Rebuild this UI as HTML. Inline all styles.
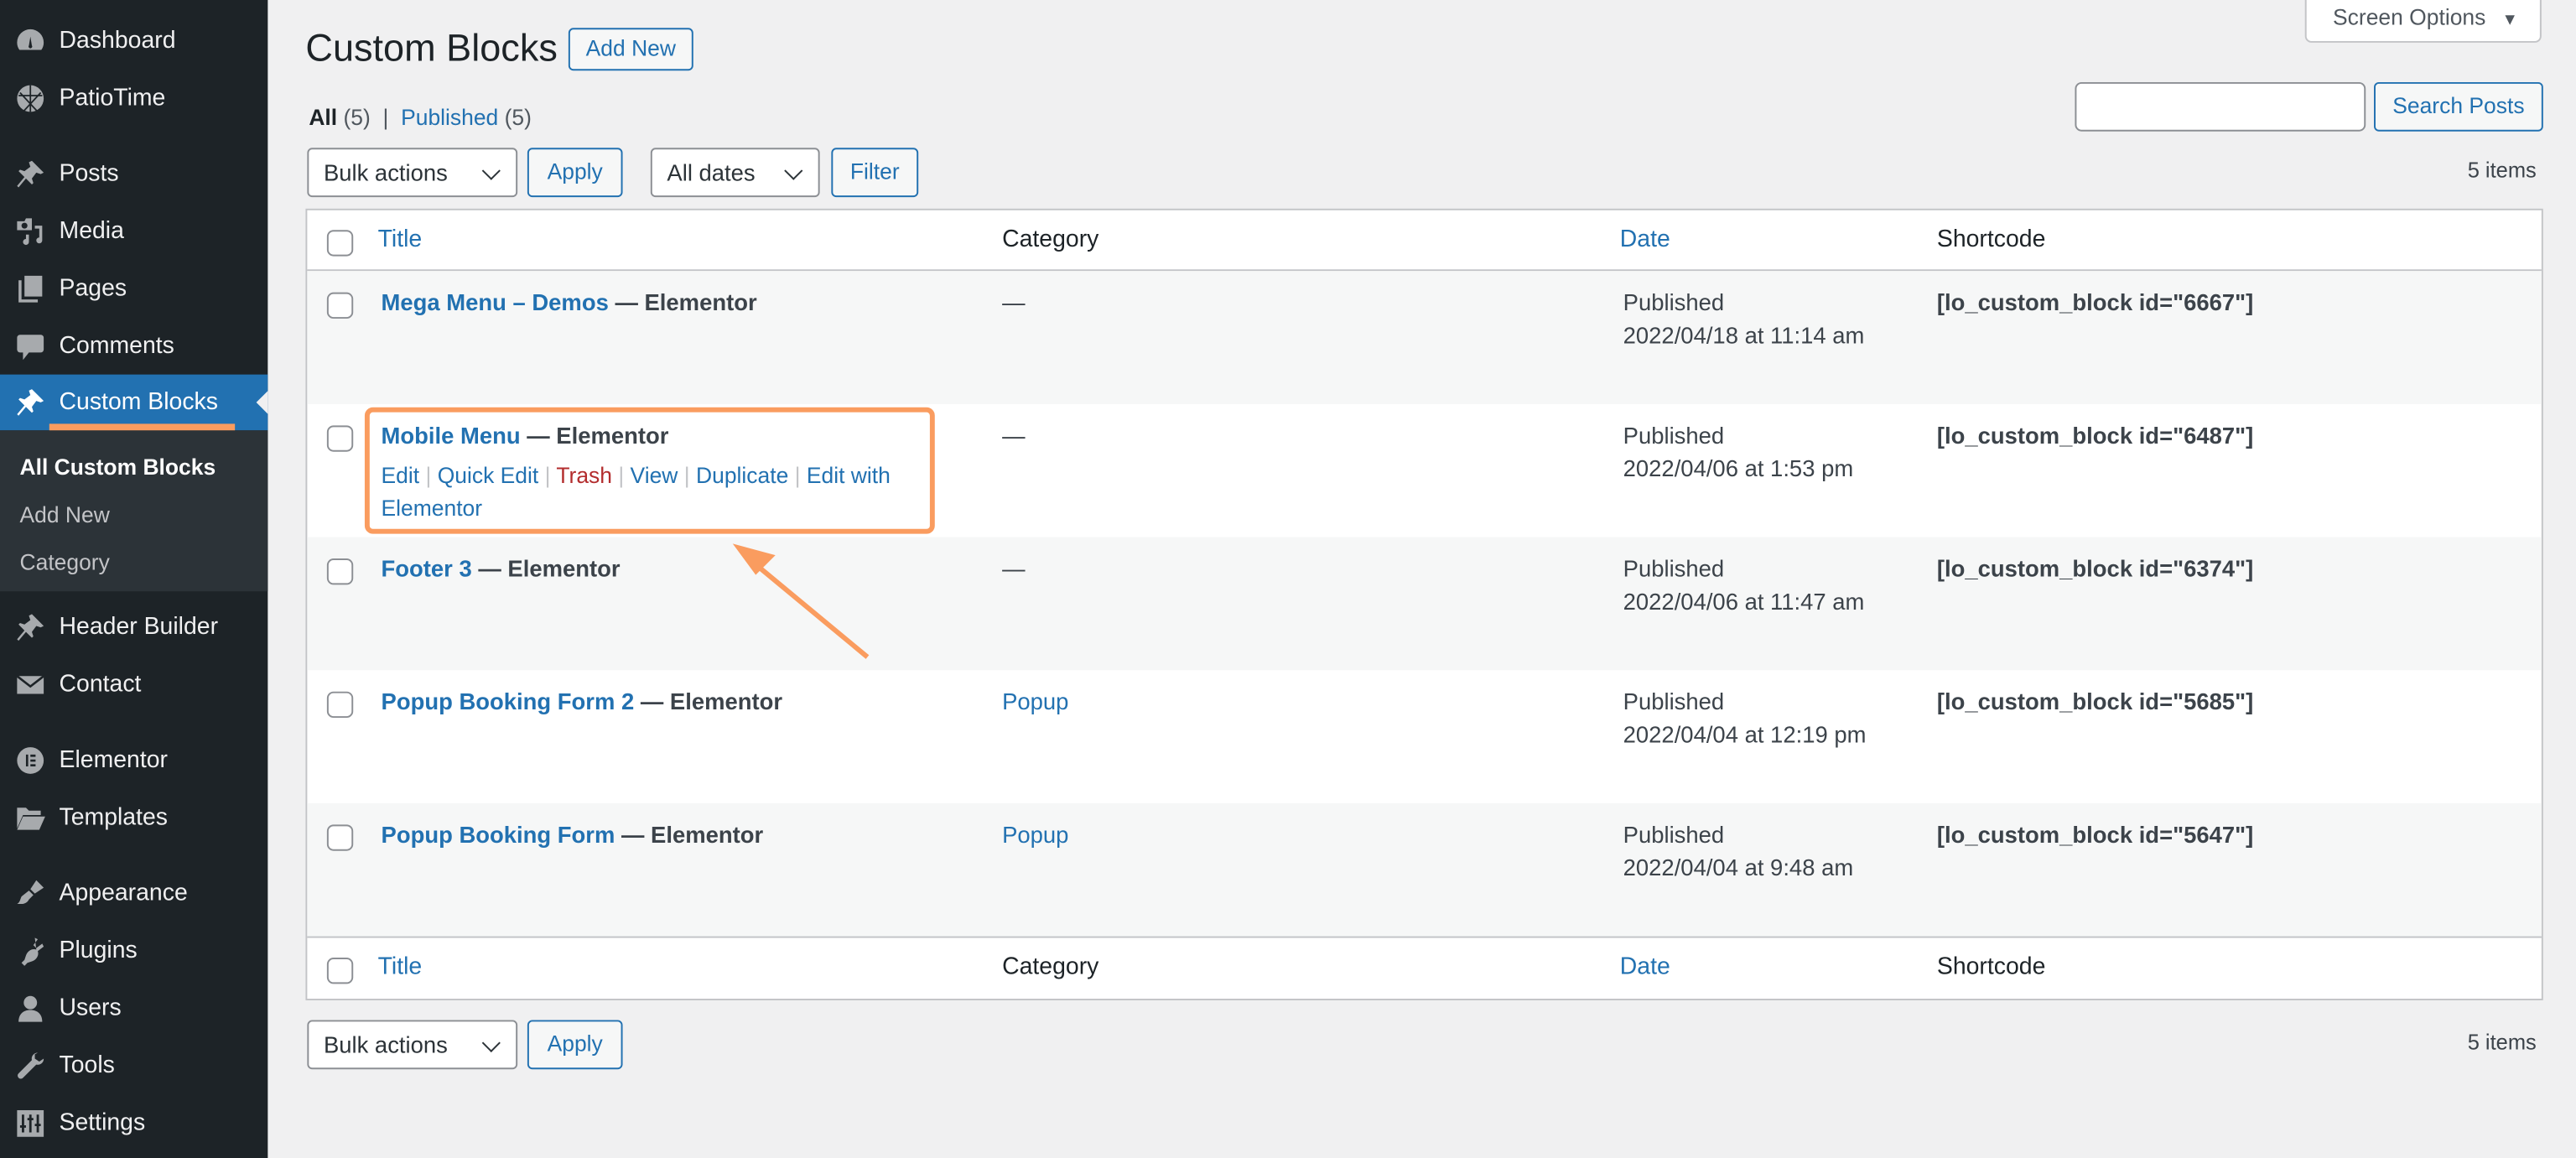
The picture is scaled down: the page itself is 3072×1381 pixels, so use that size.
<!DOCTYPE html>
<html><head><meta charset="utf-8"><style>
*{box-sizing:border-box;margin:0;padding:0}
html,body{width:3072px;height:1381px;overflow:hidden;background:#f0f0f1}
#w{width:1568px;height:705px;transform:scale(1.95918,1.9589);transform-origin:0 0;position:relative;font-family:"Liberation Sans",sans-serif;font-size:14px;color:#3c434a}
.sb{position:absolute;left:0;top:0;width:163px;height:705px;background:#1d2327}
.mi{position:absolute;left:0;width:163px;height:34px;color:#f0f0f1;font-size:14.5px;line-height:34px;padding-left:36px}
.ic{position:absolute;left:9px;top:8px;width:19px;height:18px;color:#a7aaad}
.sub{position:absolute;left:0;top:262px;width:163px;height:98px;background:#2c3338}
.sub div{position:absolute;left:12px;font-size:13.5px;color:#c3c4c7}
a,.l{color:#2271b1;text-decoration:none}
.btn{position:absolute;height:30px;border:1px solid #2271b1;border-radius:3px;color:#2271b1;background:#f6f7f7;font-size:13.5px;line-height:28px;text-align:center}
.sel{position:absolute;height:30px;border:1px solid #8c8f94;border-radius:3px;background:#fff;font-size:14px;line-height:28px;padding-left:9px;color:#2c3338}
.sel:after{content:"";position:absolute;right:11px;top:9px;width:7px;height:7px;border-right:1.5px solid #2c3338;border-bottom:1.5px solid #2c3338;transform:rotate(45deg)}
.tbl{position:absolute;left:186px;top:127px;width:1362px;height:482px;border:1px solid #c3c4c7;background:#fff}
.row{position:absolute;left:0;width:1360px;height:81px}
.cb{position:absolute;left:12px;width:16px;height:16px;border:1px solid #8c8f94;border-radius:4px;background:#fff}
.t{position:absolute;left:45px;font-weight:bold;font-size:14px}
.t b{color:#2271b1}
.c{position:absolute;left:423px}
.d{position:absolute;left:801px;line-height:20px}
.s{position:absolute;left:992px;font-weight:bold}
.h{position:absolute;font-size:14.5px;color:#1d2327}
</style></head><body><div id="w">
<div class="sb">
<div class="mi" style="top:8px"><svg class="ic" viewBox="0 0 20 20"><path fill="#a7aaad" d="M10 2a9 9 0 0 0-9 9c0 2 .6 3.6 1.6 5h14.8c1-1.4 1.6-3 1.6-5a9 9 0 0 0-9-9zm0 5 1 6a1.2 1.2 0 1 1-2 0z"/></svg>Dashboard</div>
<div class="mi" style="top:43px"><svg class="ic" viewBox="0 0 20 20"><circle cx="10" cy="10" r="9" fill="#a7aaad"/><path d="M10 1v18M3 6l12 13M17 6 5 19M2 8h16" stroke="#1d2327" stroke-width="1"/></svg>PatioTime</div>
<div class="mi" style="top:89px"><svg class="ic" viewBox="0 0 20 20"><path fill="#a7aaad" d="M11 1l8 8-2 1-3-1-3 4 1 3-1 1-4-4-5 6-1-1 5-6-4-4 1-1 3 1 4-3-1-3z"/></svg>Posts</div>
<div class="mi" style="top:124px"><svg class="ic" viewBox="0 0 20 20"><path fill="#a7aaad" d="M1 3h5l1-2h4v8H1zM13 6h5v10a2 2 0 1 1-2-2V8h-3zM9 12v5a2 2 0 1 1-2-2v-3z"/><circle cx="6" cy="6" r="2" fill="#1d2327"/></svg>Media</div>
<div class="mi" style="top:159px"><svg class="ic" viewBox="0 0 20 20"><path fill="#a7aaad" d="M6 1h12v14H6zM2 4h2v13h11v2H2z"/></svg>Pages</div>
<div class="mi" style="top:194px"><svg class="ic" viewBox="0 0 20 20"><path fill="#a7aaad" d="M3 2h14a2 2 0 0 1 2 2v8a2 2 0 0 1-2 2H9l-4 5v-5H3a2 2 0 0 1-2-2V4a2 2 0 0 1 2-2z"/></svg>Comments</div>
<div class="mi" style="top:228px;background:#2271b1;color:#fff"><svg class="ic" viewBox="0 0 20 20" style="color:#fff"><path fill="#fff" d="M11 1l8 8-2 1-3-1-3 4 1 3-1 1-4-4-5 6-1-1 5-6-4-4 1-1 3 1 4-3-1-3z"/></svg>Custom Blocks
<div style="position:absolute;right:0;top:10px;border:7px solid transparent;border-right-color:#f0f0f1;border-left:0"></div></div>
<div style="position:absolute;left:30px;top:258px;width:113px;height:5px;background:#fa9c5f"></div>
<div class="sub"><div style="top:15px;color:#fff;font-weight:bold">All Custom Blocks</div><div style="top:44px">Add New</div><div style="top:73px">Category</div></div>
<div class="mi" style="top:365px"><svg class="ic" viewBox="0 0 20 20"><path fill="#a7aaad" d="M11 1l8 8-2 1-3-1-3 4 1 3-1 1-4-4-5 6-1-1 5-6-4-4 1-1 3 1 4-3-1-3z"/></svg>Header Builder</div>
<div class="mi" style="top:400px"><svg class="ic" viewBox="0 0 20 20"><path fill="#a7aaad" d="M1 4h18v12H1z"/><path d="M1 4l9 7 9-7" stroke="#1d2327" stroke-width="1.5" fill="none"/></svg>Contact</div>
<div class="mi" style="top:446px"><svg class="ic" viewBox="0 0 20 20"><circle cx="10" cy="10" r="9" fill="#a7aaad"/><path d="M7 6h1.5v8H7zM10 6h3.5v1.5H10zM10 9.3h3.5v1.5H10zM10 12.5h3.5V14H10z" fill="#1d2327"/></svg>Elementor</div>
<div class="mi" style="top:481px"><svg class="ic" viewBox="0 0 20 20"><path fill="#a7aaad" d="M1 3h6l2 2h8v3H5l-4 9zM5 9h15l-4 9H1z"/></svg>Templates</div>
<div class="mi" style="top:527px"><svg class="ic" viewBox="0 0 20 20"><path fill="#a7aaad" d="M14 1l5 5-6 4-3-3zM9 8l3 3-3 3c-1 2-3 3-5 3H1c2-1 2-3 3-5z"/></svg>Appearance</div>
<div class="mi" style="top:562px"><svg class="ic" viewBox="0 0 20 20"><path fill="#a7aaad" d="M13 1l2 1-3 4 2 2 4-3 1 2-4 3c1 3-1 6-4 7l-3 1-2 2-2-2 2-2 1-3c1-3 4-5 7-4z"/></svg>Plugins</div>
<div class="mi" style="top:597px"><svg class="ic" viewBox="0 0 20 20"><circle cx="10" cy="6" r="4.5" fill="#a7aaad"/><path fill="#a7aaad" d="M2 19c0-5 3-8 8-8s8 3 8 8z"/></svg>Users</div>
<div class="mi" style="top:632px"><svg class="ic" viewBox="0 0 20 20"><path fill="#a7aaad" d="M15 1a4 4 0 0 0-4 5L2 15a2 2 0 1 0 3 3l9-9a4 4 0 0 0 5-4l-3 2-3-2V2z"/></svg>Tools</div>
<div class="mi" style="top:667px"><svg class="ic" viewBox="0 0 20 20"><path fill="#a7aaad" d="M1 1h18v18H1z"/><path d="M5 4v12M10 4v12M15 4v12M3 12h4M8 7h4M13 11h4" stroke="#1d2327" stroke-width="1.6"/></svg>Settings</div>
</div>

<div style="position:absolute;left:1403px;top:-4px;width:144px;height:30px;border:1px solid #c3c4c7;border-radius:0 0 4px 4px;background:#fff;font-size:13.5px;line-height:28px;padding-left:16px;color:#50575e">Screen Options <span style="font-size:10px;margin-left:6px">▼</span></div>
<div style="position:absolute;left:186px;top:16px;font-size:23px;color:#1d2327">Custom Blocks</div>
<div class="btn" style="left:346px;top:17px;width:76px;height:26px;line-height:24px;font-size:13.5px">Add New</div>
<div style="position:absolute;left:188px;top:64px;font-size:13.5px;color:#50575e"><b style="color:#1d2327">All</b> (5) &nbsp;| &nbsp;<span class="l">Published</span> (5)</div>
<div style="position:absolute;left:1263px;top:50px;width:177px;height:30px;border:1px solid #8c8f94;border-radius:4px;background:#fff"></div>
<div class="btn" style="left:1445px;top:50px;width:103px">Search Posts</div>
<div class="sel" style="left:187px;top:90px;width:128px">Bulk actions</div>
<div class="btn" style="left:321px;top:90px;width:58px">Apply</div>
<div class="sel" style="left:396px;top:90px;width:103px">All dates</div>
<div class="btn" style="left:506px;top:90px;width:53px">Filter</div>
<div style="position:absolute;left:1502px;top:96px;font-size:13px">5 items</div>

<div class="tbl">
<div class="row" style="top:0;height:37px;border-bottom:1px solid #c3c4c7"><div class="cb" style="top:12px"></div><div class="h l" style="left:43px;top:10px;color:#2271b1">Title</div><div class="h" style="left:423px;top:10px">Category</div><div class="h l" style="left:799px;top:10px;color:#2271b1">Date</div><div class="h" style="left:992px;top:10px">Shortcode</div></div>
<div class="row" style="top:37px;background:#f6f7f7"><div class="cb" style="top:13px"></div><div class="t" style="top:11px"><b>Mega Menu – Demos</b> — Elementor</div><div class="c" style="top:11px">—</div><div class="d" style="top:9px">Published<br>2022/04/18 at 11:14 am</div><div class="s" style="top:11px">[lo_custom_block id="6667"]</div></div>
<div class="row" style="top:118px"><div class="cb" style="top:13px"></div><div class="t" style="top:11px"><b>Mobile Menu</b> — Elementor</div><div style="position:absolute;left:45px;top:34px;line-height:20px;font-size:13.5px;width:330px;color:#c3c4c7"><span class="l">Edit</span> | <span class="l">Quick Edit</span> | <span style="color:#b32d2e">Trash</span> | <span class="l">View</span> | <span class="l">Duplicate</span> | <span class="l">Edit with</span><br><span class="l">Elementor</span></div><div class="c" style="top:11px">—</div><div class="d" style="top:9px">Published<br>2022/04/06 at 1:53 pm</div><div class="s" style="top:11px">[lo_custom_block id="6487"]</div></div>
<div class="row" style="top:199px;background:#f6f7f7"><div class="cb" style="top:13px"></div><div class="t" style="top:11px"><b>Footer 3</b> — Elementor</div><div class="c" style="top:11px">—</div><div class="d" style="top:9px">Published<br>2022/04/06 at 11:47 am</div><div class="s" style="top:11px">[lo_custom_block id="6374"]</div></div>
<div class="row" style="top:280px"><div class="cb" style="top:13px"></div><div class="t" style="top:11px"><b>Popup Booking Form 2</b> — Elementor</div><div class="c l" style="top:11px">Popup</div><div class="d" style="top:9px">Published<br>2022/04/04 at 12:19 pm</div><div class="s" style="top:11px">[lo_custom_block id="5685"]</div></div>
<div class="row" style="top:361px;background:#f6f7f7"><div class="cb" style="top:13px"></div><div class="t" style="top:11px"><b>Popup Booking Form</b> — Elementor</div><div class="c l" style="top:11px">Popup</div><div class="d" style="top:9px">Published<br>2022/04/04 at 9:48 am</div><div class="s" style="top:11px">[lo_custom_block id="5647"]</div></div>
<div class="row" style="top:442px;height:38px;border-top:1px solid #c3c4c7"><div class="cb" style="top:12px"></div><div class="h" style="left:43px;top:10px;color:#2271b1">Title</div><div class="h" style="left:423px;top:10px">Category</div><div class="h" style="left:799px;top:10px;color:#2271b1">Date</div><div class="h" style="left:992px;top:10px">Shortcode</div></div>
</div>
<div style="position:absolute;left:222px;top:248px;width:347px;height:77px;border:3px solid #fa9c5f;border-radius:5px"></div>
<svg style="position:absolute;left:0;top:0" width="1568" height="705"><path d="M528 400 L458 342" stroke="#fa9c5f" stroke-width="3" fill="none"/><path d="M446 331 L472 338 L460 350 Z" fill="#fa9c5f"/></svg>
<div class="sel" style="left:187px;top:621px;width:128px">Bulk actions</div>
<div class="btn" style="left:321px;top:621px;width:58px">Apply</div>
<div style="position:absolute;left:1502px;top:627px;font-size:13px">5 items</div>
</div></body></html>
